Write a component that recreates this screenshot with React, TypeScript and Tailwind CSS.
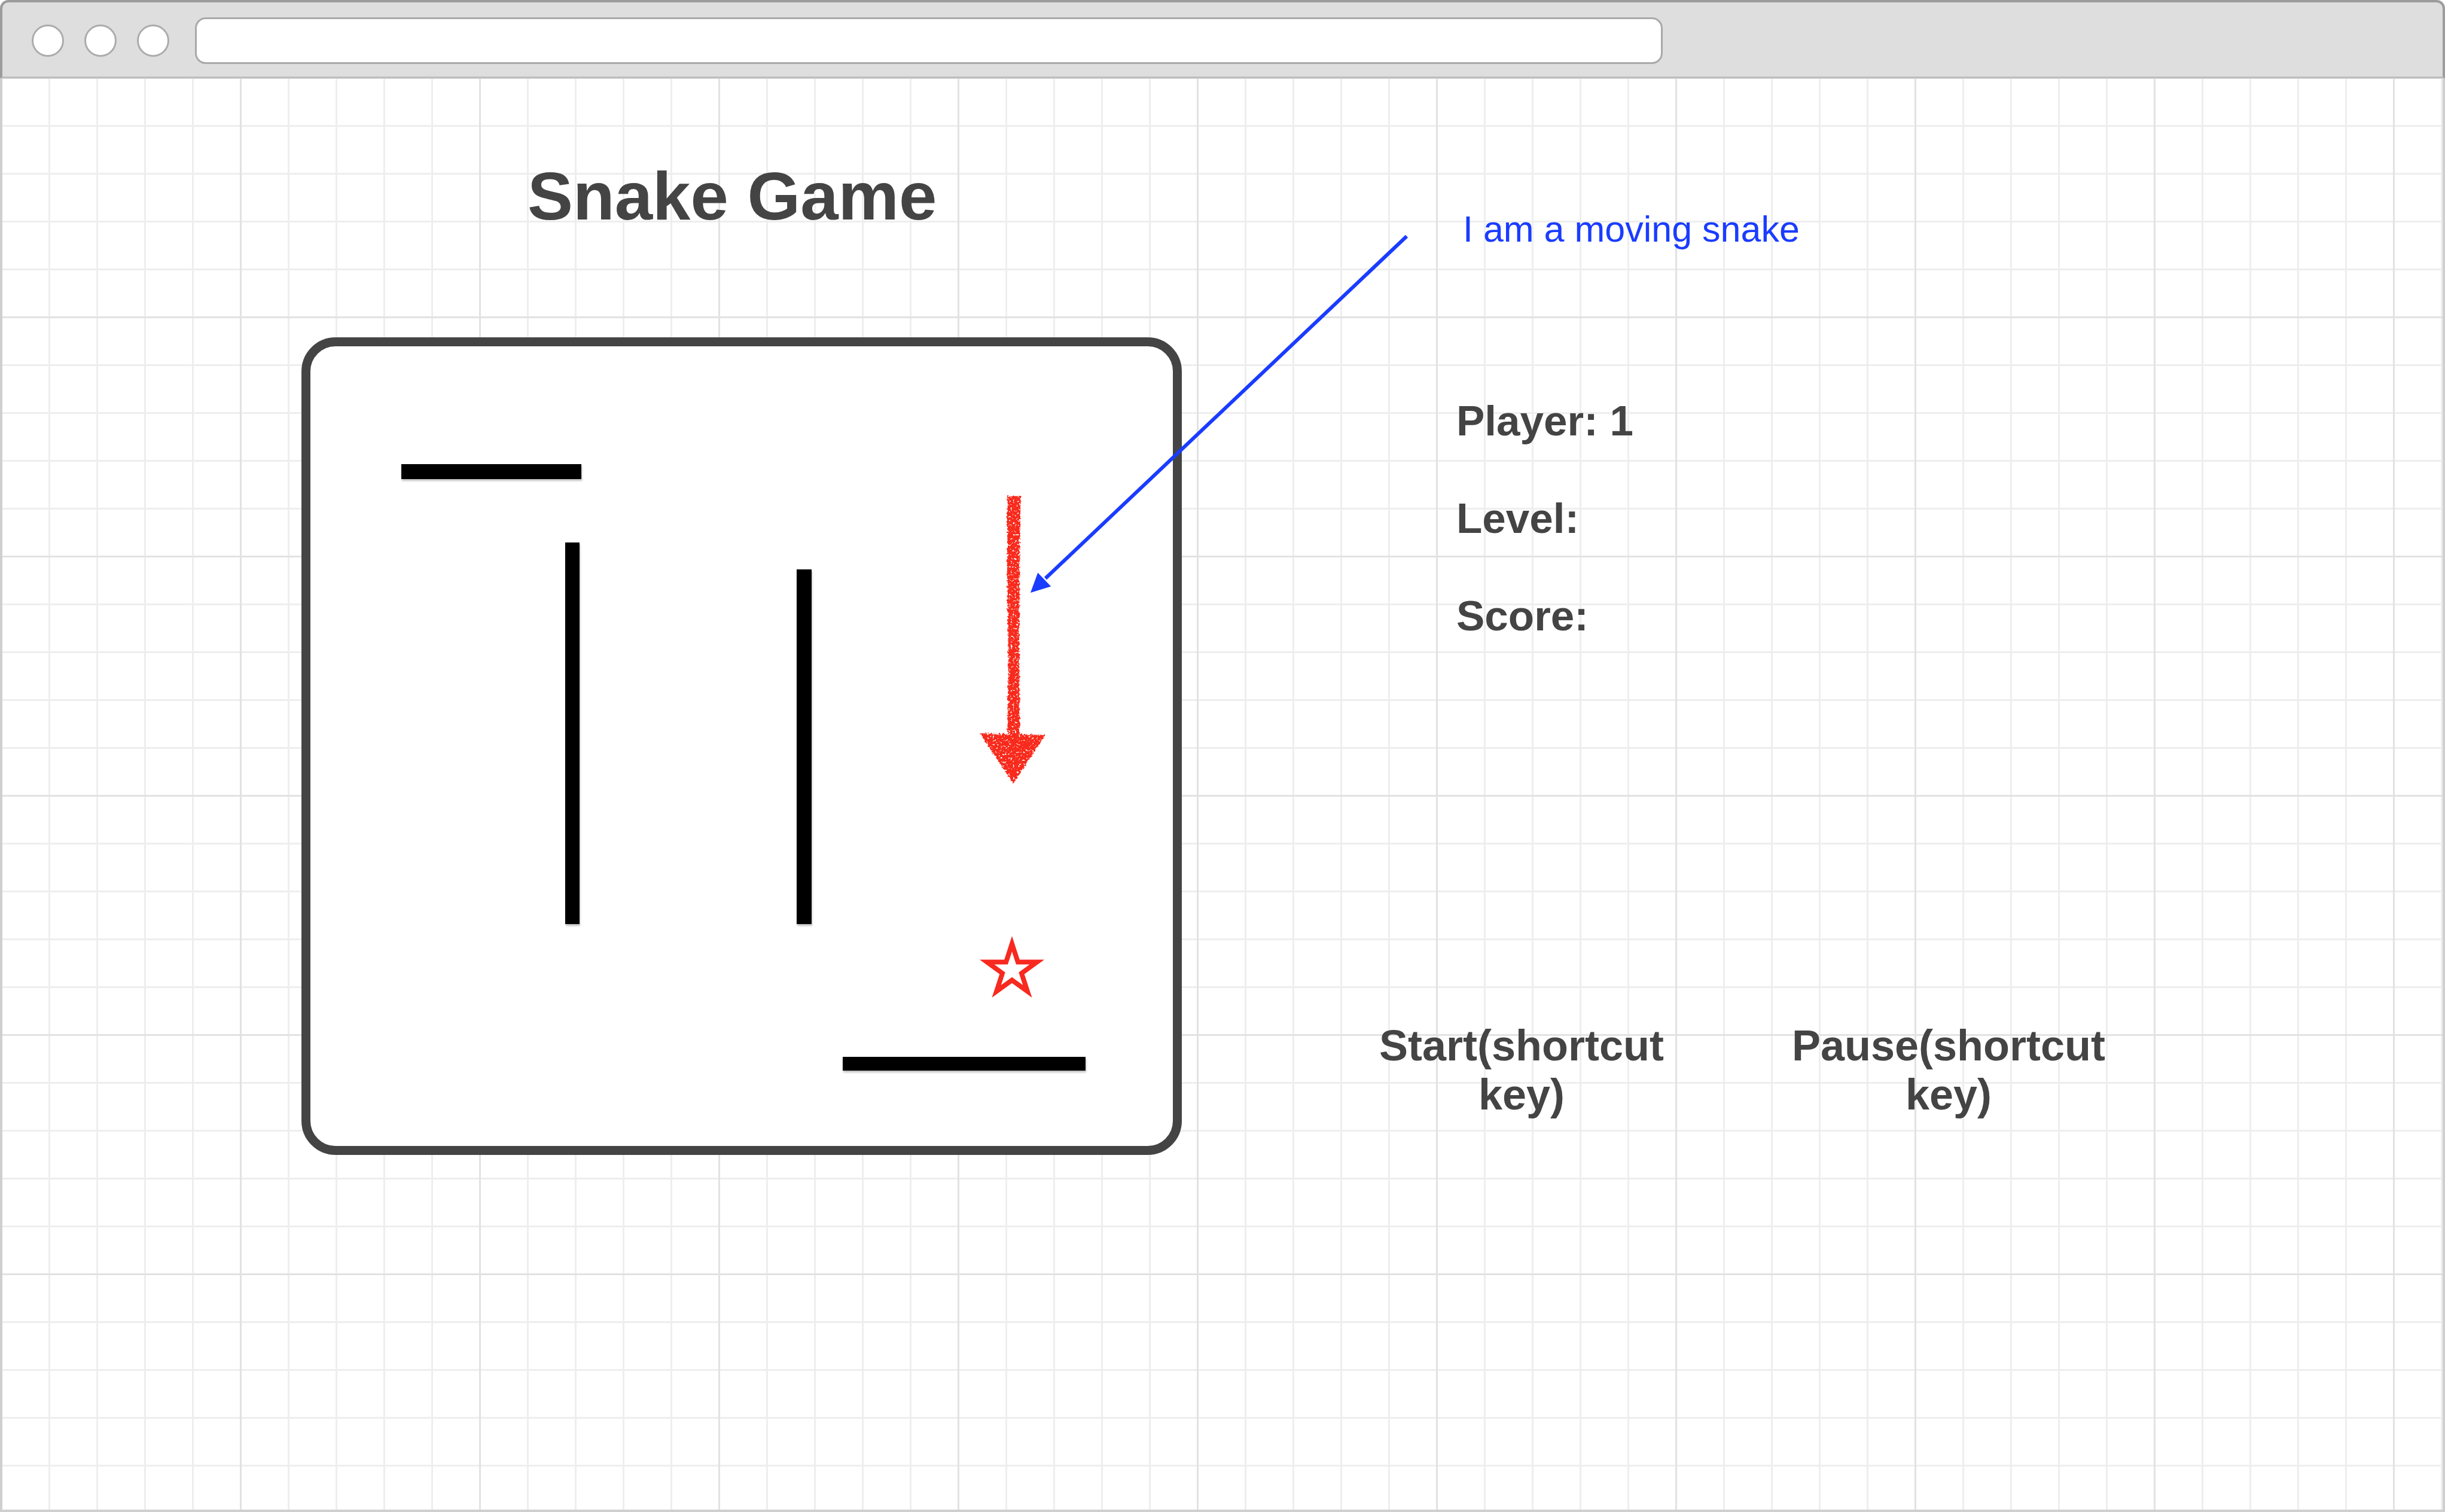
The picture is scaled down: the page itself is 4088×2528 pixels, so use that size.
import React from "react";

function Overlay() {
  const star = [
    [1692, 1578],
    [1701.9, 1608.4],
    [1733.8, 1608.4],
    [1708.0, 1627.2],
    [1717.9, 1657.6],
    [1692, 1638.8],
    [1666.1, 1657.6],
    [1676.0, 1627.2],
    [1650.2, 1608.4],
    [1682.1, 1608.4],
  ]
    .map((p) => p.join(","))
    .join(" ");
  return (
    <svg
      className="absolute top-0 left-0 pointer-events-none"
      width={4088}
      height={2528}
      viewBox="0 0 4088 2528"
    >
      <defs>
        <filter id="crayon" x="-30%" y="-5%" width="160%" height="110%">
          <feTurbulence type="fractalNoise" baseFrequency="0.3" numOctaves="2" seed="3" result="noise" />
          <feDisplacementMap in="SourceGraphic" in2="noise" scale="7" xChannelSelector="R" yChannelSelector="G" result="disp" />
          <feTurbulence type="fractalNoise" baseFrequency="0.3" numOctaves="2" seed="11" result="n2" />
          <feColorMatrix
            in="n2"
            type="matrix"
            values="0 0 0 0 0  0 0 0 0 0  0 0 0 0 0  8 0 0 0 -2.1"
            result="holes"
          />
          <feComposite in="disp" in2="holes" operator="in" />
        </filter>
      </defs>
      {/* red hand-drawn snake arrow */}
      <g filter="url(#crayon)" fill="#f8291f">
        <path d="M1684 830 L1707 829 L1705 900 L1704 1050 L1705 1232 L1684 1232 L1686 1100 L1684 960 Z" />
        <path d="M1638 1226 L1748 1229 L1694 1310 Z" />
      </g>
      {/* star */}
      <polygon points={star} fill="white" stroke="#f8291f" strokeWidth={8} strokeLinejoin="miter" />
      {/* blue annotation arrow */}
      <line x1={2352} y1={395} x2={1748} y2={967} stroke="#1a3cff" strokeWidth={6} />
      <polygon points="1723,991 1757.2,980.6 1735.2,957.4" fill="#1a3cff" />
    </svg>
  );
}

function Wall({ cls }: { cls: string }) {
  return <div className={"absolute bg-black shadow-[1px_3px_3px_rgba(0,0,0,0.25)] " + cls} />;
}

export default function App() {
  return (
    <div className="relative w-[4088px] h-[2528px] bg-white overflow-hidden font-['Liberation_Sans',Arial,sans-serif]">
      <div className="flex flex-col h-full">
        {/* browser toolbar */}
        <div className="h-[131px] shrink-0 flex items-center pt-[4px] pl-[49px] bg-[#dedede] border-t-4 border-x-4 border-[#9c9c9c] border-b-[3px] border-b-[#bdbdbd] rounded-t-[14px]">
          <div className="flex gap-[34px]">
            <div className="w-[54px] h-[54px] rounded-full border-[3px] border-[#ababab] bg-white" />
            <div className="w-[54px] h-[54px] rounded-full border-[3px] border-[#ababab] bg-white" />
            <div className="w-[54px] h-[54px] rounded-full border-[3px] border-[#ababab] bg-white" />
          </div>
          <div className="ml-[43px] w-[2454px] h-[78px] rounded-[18px] border-[3px] border-[#a9a9a9] bg-white" />
        </div>

        {/* canvas */}
        <div className="relative flex-1 flex border-x-4 border-b-4 border-[#cfcfcf] bg-white bg-[linear-gradient(to_right,#e2e2e2_3px,transparent_3px),linear-gradient(to_bottom,#e2e2e2_3px,transparent_3px),linear-gradient(to_right,#eeeeee_3px,transparent_3px),linear-gradient(to_bottom,#eeeeee_3px,transparent_3px)] bg-size-[400px_400px,400px_400px,80px_80px,80px_80px] bg-position-[397px_398px,397px_398px,77px_78px,77px_78px] pl-[500px]">
          {/* left column */}
          <div className="flex flex-col w-[1472px] shrink-0">
            <h1 className="mt-[140px] ml-[378px] text-[114px] leading-none font-bold text-[#444444] whitespace-nowrap">
              Snake Game
            </h1>
            <div className="relative mt-[179px] w-[1472px] h-[1367px] border-[15px] border-[#444444] rounded-[57px] bg-white">
              <Wall cls="left-[152px] top-[197px] w-[301px] h-[25px]" />
              <Wall cls="left-[426px] top-[328px] w-[24px] h-[638px]" />
              <Wall cls="left-[813px] top-[373px] w-[25px] h-[593px]" />
              <Wall cls="left-[890px] top-[1188px] w-[406px] h-[23px]" />
            </div>
          </div>

          {/* right column */}
          <div className="flex flex-col ml-[288px]">
            <div className="mt-[222px] ml-[182px] text-[61px] leading-none text-[#1a3cff] whitespace-nowrap">
              I am a moving snake
            </div>
            <div className="mt-[255px] ml-[171px] flex flex-col gap-[93px] text-[71px] leading-[70px] font-bold text-[#444444] whitespace-nowrap">
              <div>Player: 1</div>
              <div>Level:</div>
              <div>Score:</div>
            </div>
            <div className="mt-[642px] flex gap-[154px] text-[72px] leading-[82px] font-bold text-[#444444]">
              <div className="w-[560px] text-center">Start(shortcut key)</div>
              <div className="w-[560px] text-center">Pause(shortcut key)</div>
            </div>
          </div>
        </div>
      </div>
      <Overlay />
    </div>
  );
}
